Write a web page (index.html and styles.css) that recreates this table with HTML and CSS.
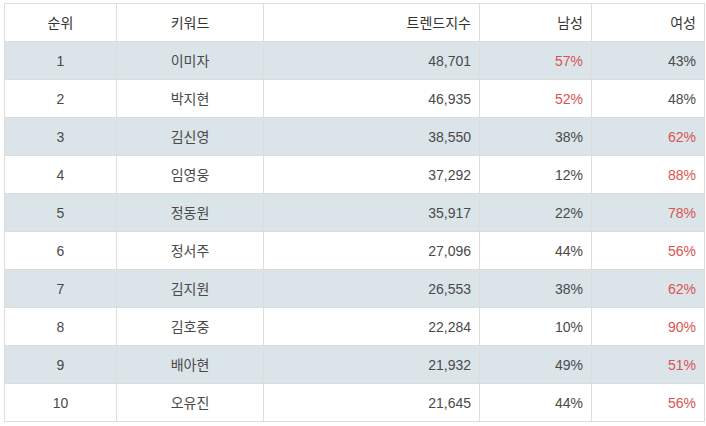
FILE: index.html
```html
<!DOCTYPE html>
<html lang="ko">
<head>
<meta charset="utf-8">
<link rel="stylesheet" href="styles.css">
</head>
<body>
<table class="trend">
  <colgroup>
    <col class="c-rank"><col class="c-kw"><col class="c-idx"><col class="c-m"><col class="c-f">
  </colgroup>
  <thead>
    <tr><th class="center">순위</th><th class="center">키워드</th><th>트렌드지수</th><th>남성</th><th>여성</th></tr>
  </thead>
  <tbody>
    <tr class="odd"><td class="center">1</td><td class="center">이미자</td><td>48,701</td><td class="red">57%</td><td>43%</td></tr>
    <tr><td class="center">2</td><td class="center">박지현</td><td>46,935</td><td class="red">52%</td><td>48%</td></tr>
    <tr class="odd"><td class="center">3</td><td class="center">김신영</td><td>38,550</td><td>38%</td><td class="red">62%</td></tr>
    <tr><td class="center">4</td><td class="center">임영웅</td><td>37,292</td><td>12%</td><td class="red">88%</td></tr>
    <tr class="odd"><td class="center">5</td><td class="center">정동원</td><td>35,917</td><td>22%</td><td class="red">78%</td></tr>
    <tr><td class="center">6</td><td class="center">정서주</td><td>27,096</td><td>44%</td><td class="red">56%</td></tr>
    <tr class="odd"><td class="center">7</td><td class="center">김지원</td><td>26,553</td><td>38%</td><td class="red">62%</td></tr>
    <tr><td class="center">8</td><td class="center">김호중</td><td>22,284</td><td>10%</td><td class="red">90%</td></tr>
    <tr class="odd"><td class="center">9</td><td class="center">배아현</td><td>21,932</td><td>49%</td><td class="red">51%</td></tr>
    <tr><td class="center">10</td><td class="center">오유진</td><td>21,645</td><td>44%</td><td class="red">56%</td></tr>
  </tbody>
</table>
</body>
</html>
```
FILE: styles.css
```css
html, body {
  margin: 0;
  padding: 0;
  background: #ffffff;
}
body {
  padding: 3px 0 0 4px;
  font-family: "Liberation Sans", "Noto Sans CJK KR", sans-serif;
  font-size: 14px;
  color: #4a4a4a;
}
.trend {
  border-collapse: collapse;
  width: 700px;
  table-layout: fixed;
}
.c-rank { width: 112px; }
.c-kw { width: 147px; }
.c-idx { width: 216px; }
.c-m { width: 112px; }
.c-f { width: 113px; }
.trend th, .trend td {
  border: 1px solid #dddddd;
  height: 38px;
  padding: 0 8px;
  text-align: right;
  vertical-align: middle;
  box-sizing: border-box;
  font-weight: normal;
  line-height: 16px;
}
.trend th {
  color: #333333;
}
.trend .center {
  text-align: center;
}
.trend tr.odd td {
  background: #dbe4e9;
}
.trend .red {
  color: #d9534f;
}
```
